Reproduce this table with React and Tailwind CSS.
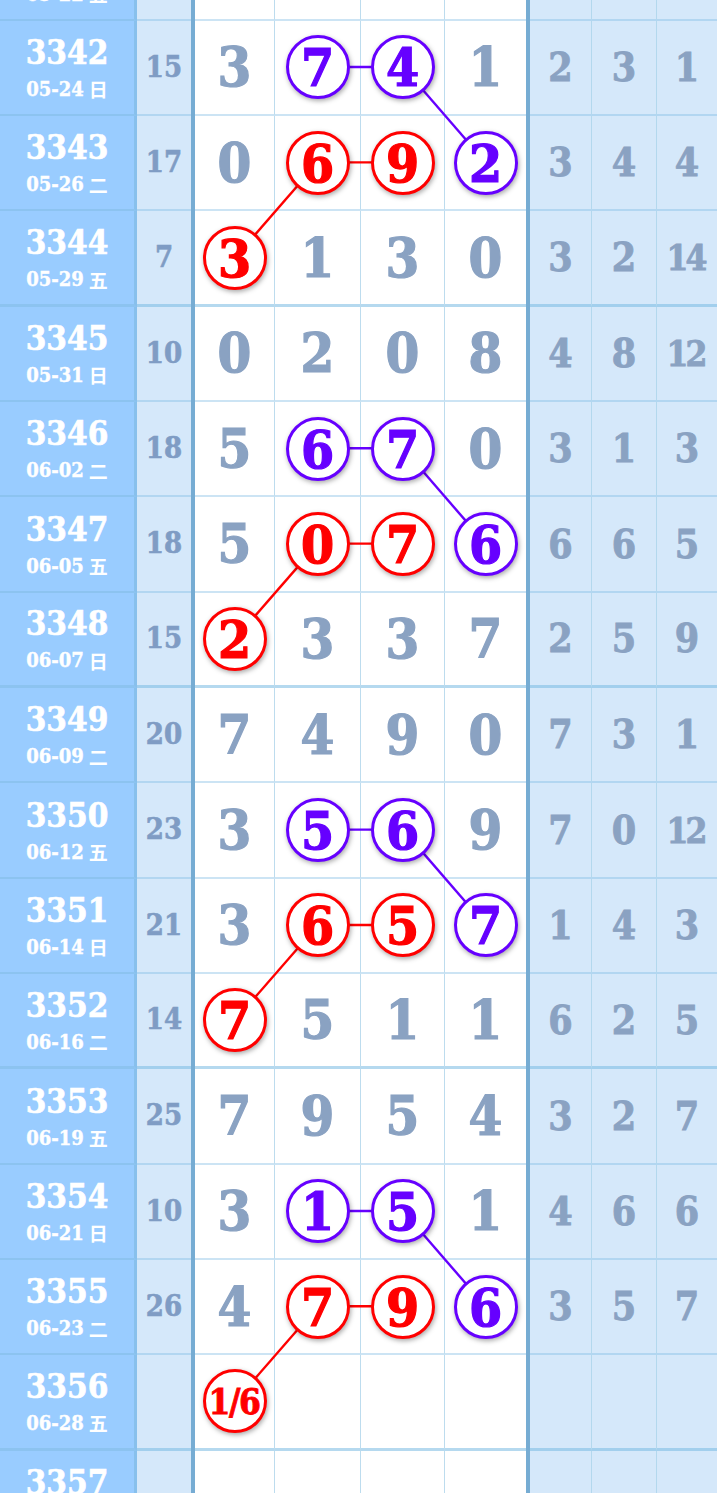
import React from "react";

// one entry per draw: issue, date, weekday, sum, four digits, three tail numbers
// circle marks: "b" = blue, "r" = red, placed before the digit
const draws = [
  ["3341", "05-22", "五", "12", "2 5 8 1", "4 1 3"],
  ["3342", "05-24", "日", "15", "3 b7 b4 1", "2 3 1"],
  ["3343", "05-26", "二", "17", "0 r6 r9 b2", "3 4 4"],
  ["3344", "05-29", "五", "7", "r3 1 3 0", "3 2 14"],
  ["3345", "05-31", "日", "10", "0 2 0 8", "4 8 12"],
  ["3346", "06-02", "二", "18", "5 b6 b7 0", "3 1 3"],
  ["3347", "06-05", "五", "18", "5 r0 r7 b6", "6 6 5"],
  ["3348", "06-07", "日", "15", "r2 3 3 7", "2 5 9"],
  ["3349", "06-09", "二", "20", "7 4 9 0", "7 3 1"],
  ["3350", "06-12", "五", "23", "3 b5 b6 9", "7 0 12"],
  ["3351", "06-14", "日", "21", "3 r6 r5 b7", "1 4 3"],
  ["3352", "06-16", "二", "14", "r7 5 1 1", "6 2 5"],
  ["3353", "06-19", "五", "25", "7 9 5 4", "3 2 7"],
  ["3354", "06-21", "日", "10", "3 b1 b5 1", "4 6 6"],
  ["3355", "06-23", "二", "26", "4 r7 r9 b6", "3 5 7"],
  ["3356", "06-28", "五", "", "r1/6 - - -", "- - -"],
  ["3357", "06-30", "日", "", "- - - -", "- - -"],
];

const ROW_H = 95.33;
const CELL_X = [235, 318, 403, 485.5];
const COLORS = { b: "#6600ff", r: "#ff0000" };

const parse = (cell) => {
  if (cell === "-") return { text: "" };
  if (cell[0] === "b" || cell[0] === "r") return { text: cell.slice(1), mark: cell[0] };
  return { text: cell };
};

const rows = draws.map(([issue, date, wd, sum, digits, tail]) => ({
  issue,
  date,
  wd,
  sum,
  digits: digits.split(" ").map(parse),
  tail: tail.split(" ").map((t) => (t === "-" ? "" : t)),
}));

// links between same-coloured marks in neighbouring columns, same row or next row
const links = [];
rows.forEach((row, r) => {
  row.digits.forEach((d, c) => {
    if (!d.mark) return;
    const right = row.digits[c + 1];
    if (right && right.mark === d.mark) links.push([r, c, r, c + 1, d.mark]);
    const next = rows[r + 1];
    if (!next) return;
    [c - 1, c + 1].forEach((nc) => {
      if (next.digits[nc] && next.digits[nc].mark === d.mark) links.push([r, c, r + 1, nc, d.mark]);
    });
  });
});

const cy = (r) => r * ROW_H + (ROW_H - 2) / 2;

const serif = "font-['DejaVu_Serif_Condensed','DejaVu_Serif',serif] [font-stretch:condensed] font-bold";

const Ball = ({ text, mark }) => (
  <div
    className={`relative z-[2] w-[64px] h-[64px] rounded-full bg-white border-[3px] flex items-center justify-center shadow-[1px_2px_5px_rgba(0,0,0,0.35)] ${
      mark === "b" ? "border-[#6600ff] text-[#6600ff]" : "border-[#ff0000] text-[#ff0000]"
    } ${
      text.length > 1
        ? "text-[35px] tracking-[-1.5px] pr-[1px] [-webkit-text-stroke:0.8px_currentColor]"
        : "text-[53px] pt-[1px] [-webkit-text-stroke:1.2px_currentColor]"
    } leading-none`}
  >
    {text}
  </div>
);

const Row = ({ row }) => {
  const groupEnd = (Number(row.issue) - 3344) % 4 === 0;
  const line = groupEnd
    ? "border-b-[3px] border-b-[rgba(120,185,225,0.55)]"
    : "border-b-2 border-b-[rgba(120,185,225,0.38)]";
  const digitW = ["w-[80px] border-r", "w-[86px] border-r", "w-[84px] border-r", "w-[81px]"];
  const tailW = ["w-[62px] border-r", "w-[65px] border-r", "w-[60px]"];

  return (
    <div className="flex h-[95.33px]">
      <div
        className={`w-[137px] shrink-0 bg-[#99ccff] border-r-[3px] border-r-[#88c0ec] ${
          groupEnd ? "border-b-[3px]" : "border-b-2"
        } border-b-[#8cc3f0] flex flex-col items-center justify-center text-white`}
      >
        <div className={`${serif} text-[33px] leading-none [-webkit-text-stroke:0.6px_currentColor]`}>{row.issue}</div>
        <div className="mt-[10px] flex items-center gap-[5px] leading-none">
          <span className={`${serif} text-[20px] [-webkit-text-stroke:0.4px_currentColor]`}>{row.date}</span>
          <span className="font-['Noto_Sans_CJK_SC',sans-serif] font-bold text-[19px]">{row.wd}</span>
        </div>
      </div>
      <div
        className={`w-[54px] shrink-0 bg-[#d5e8fa] ${line} flex items-center justify-center ${serif} text-[29px] text-[#7f9cc4] [-webkit-text-stroke:0.6px_currentColor]`}
      >
        {row.sum}
      </div>
      <div className="w-[4px] shrink-0 bg-[#76acd3]" />
      {row.digits.map((d, c) => (
        <div
          key={c}
          className={`${digitW[c]} shrink-0 bg-white border-r-[#bddcee] ${line} flex items-center justify-center ${serif} text-[54px] leading-none text-[#8aa2c2] [-webkit-text-stroke:1.2px_currentColor]`}
        >
          {d.mark ? <Ball text={d.text} mark={d.mark} /> : d.text}
        </div>
      ))}
      <div className="w-[4px] shrink-0 bg-[#76acd3]" />
      {row.tail.map((t, c) => (
        <div
          key={c}
          className={`${tailW[c]} shrink-0 bg-[#d5e8fa] border-r-[#b3d8ee] ${line} flex items-center justify-center ${serif} ${
            t.length > 1 ? "text-[35px] tracking-[-3px] pr-[3px]" : "text-[39px]"
          } leading-none text-[#8aa2c2] [-webkit-text-stroke:0.8px_currentColor]`}
        >
          {t}
        </div>
      ))}
    </div>
  );
};

export default function App() {
  return (
    <div className="w-[717px] h-[1493px] overflow-hidden bg-white">
      <div className="relative -mt-[74.6px]">
        {rows.map((row) => (
          <Row key={row.issue} row={row} />
        ))}
        <svg className="absolute left-0 top-0 z-[1] pointer-events-none" width="717" height={rows.length * ROW_H}>
          {links.map(([r1, c1, r2, c2, m], i) => (
            <line
              key={i}
              x1={CELL_X[c1]}
              y1={cy(r1)}
              x2={CELL_X[c2]}
              y2={cy(r2)}
              stroke={COLORS[m]}
              strokeWidth="2.4"
            />
          ))}
        </svg>
      </div>
    </div>
  );
}
